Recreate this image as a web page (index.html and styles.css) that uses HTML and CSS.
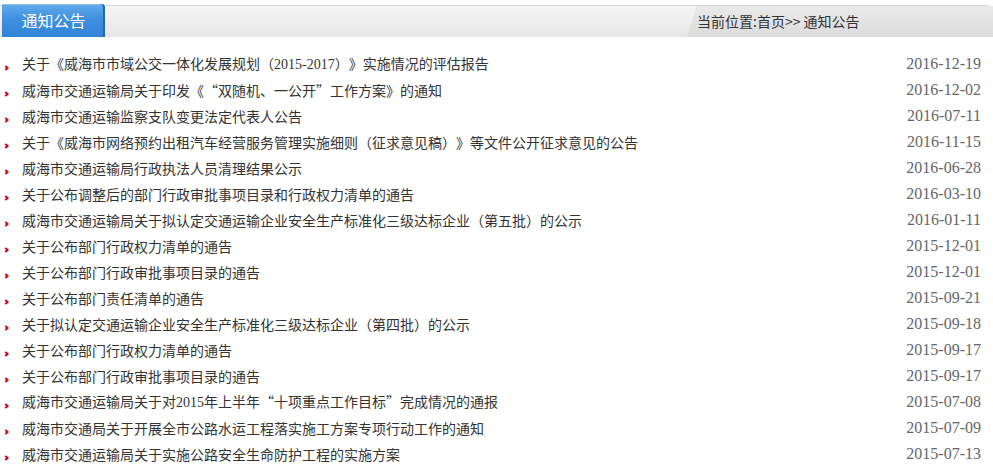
FILE: index.html
```html
<!DOCTYPE html>
<html lang="zh-CN">
	<head>
		<meta charset="utf-8" />
		<title>通知公告</title>
		<link rel="stylesheet" href="styles.css">
	</head>
	<body>
		<div class="bar">
			<div class="tab">通知公告</div>
			<div class="crumb">当前位置:首页&gt;&gt; 通知公告</div>
		</div>
		<ul class="news">
			<li><a href="#">关于《威海市市域公交一体化发展规划（<span class="num">2015-2017</span>）》实施情况的评估报告</a><span class="date">2016-12-19</span></li>
			<li><a href="#">威海市交通运输局关于印发《“双随机、一公开”工作方案》的通知</a><span class="date">2016-12-02</span></li>
			<li><a href="#">威海市交通运输监察支队变更法定代表人公告</a><span class="date">2016-07-11</span></li>
			<li><a href="#">关于《威海市网络预约出租汽车经营服务管理实施细则（征求意见稿）》等文件公开征求意见的公告</a><span class="date">2016-11-15</span></li>
			<li><a href="#">威海市交通运输局行政执法人员清理结果公示</a><span class="date">2016-06-28</span></li>
			<li><a href="#">关于公布调整后的部门行政审批事项目录和行政权力清单的通告</a><span class="date">2016-03-10</span></li>
			<li><a href="#">威海市交通运输局关于拟认定交通运输企业安全生产标准化三级达标企业（第五批）的公示</a><span class="date">2016-01-11</span></li>
			<li><a href="#">关于公布部门行政权力清单的通告</a><span class="date">2015-12-01</span></li>
			<li><a href="#">关于公布部门行政审批事项目录的通告</a><span class="date">2015-12-01</span></li>
			<li><a href="#">关于公布部门责任清单的通告</a><span class="date">2015-09-21</span></li>
			<li><a href="#">关于拟认定交通运输企业安全生产标准化三级达标企业（第四批）的公示</a><span class="date">2015-09-18</span></li>
			<li><a href="#">关于公布部门行政权力清单的通告</a><span class="date">2015-09-17</span></li>
			<li><a href="#">关于公布部门行政审批事项目录的通告</a><span class="date">2015-09-17</span></li>
			<li><a href="#">威海市交通运输局关于对<span class="num">2015</span>年上半年“十项重点工作目标”完成情况的通报</a><span class="date">2015-07-08</span></li>
			<li><a href="#">威海市交通局关于开展全市公路水运工程落实施工方案专项行动工作的通知</a><span class="date">2015-07-09</span></li>
			<li><a href="#">威海市交通运输局关于实施公路安全生命防护工程的实施方案</a><span class="date">2015-07-13</span></li>
		</ul>
	</body>
</html>
```

FILE: styles.css
```css
body {
	background: #ffffff;
	color: #333333;
	font-family: "Noto Sans CJK SC", sans-serif;
	font-size: 14px;
	margin: 0;
	padding: 0;
	text-spacing-trim: space-all;
}

.bar {
	background: linear-gradient(#f6f6f6, #e6e6e6);
	border-radius: 0 6px 0 0;
	border-top: 1px solid #d6d6d6;
	box-shadow: inset -1px 0 0 #d0d0d0;
	display: flex;
	height: 31px;
	justify-content: space-between;
	margin-top: 5px;
}

.tab {
	background: linear-gradient(#62acec, #4090e0 45%, #3383d6);
	border-radius: 0 4px 0 0;
	box-shadow: inset -2px 0 0 #2a64a8, inset 0 1px 0 #8cc2f2;
	color: #ffffff;
	font-size: 16px;
	height: 33px;
	line-height: 33px;
	margin: -2px 0 0 2px;
	text-align: center;
	width: 103px;
}

.crumb {
	background: linear-gradient(#e9e9e9, #dcdcdc);
	clip-path: polygon(10px 0, 100% 0, 100% 100%, 0 100%);
	line-height: 31px;
	padding-left: 10px;
	width: 296px;
}

.news {
	list-style: none;
	margin: 14px 0 0 0;
	padding: 0;
}

.news li {
	align-items: center;
	display: flex;
	height: 26px;
	justify-content: space-between;
	padding: 0 12px 0 22px;
	position: relative;
}

.news li:before {
	border-right: 2px solid #c0101a;
	border-top: 2px solid #c0101a;
	content: "";
	height: 2px;
	left: 4px;
	position: absolute;
	top: 15px;
	transform: rotate(45deg);
	width: 2px;
}

.news a {
	color: #333333;
	line-height: 20px;
	text-decoration: none;
}

.num,
.date {
	font-family: "Liberation Serif", serif;
}

.date {
	color: #666666;
	font-size: 16px;
	line-height: 20px;
}
```
